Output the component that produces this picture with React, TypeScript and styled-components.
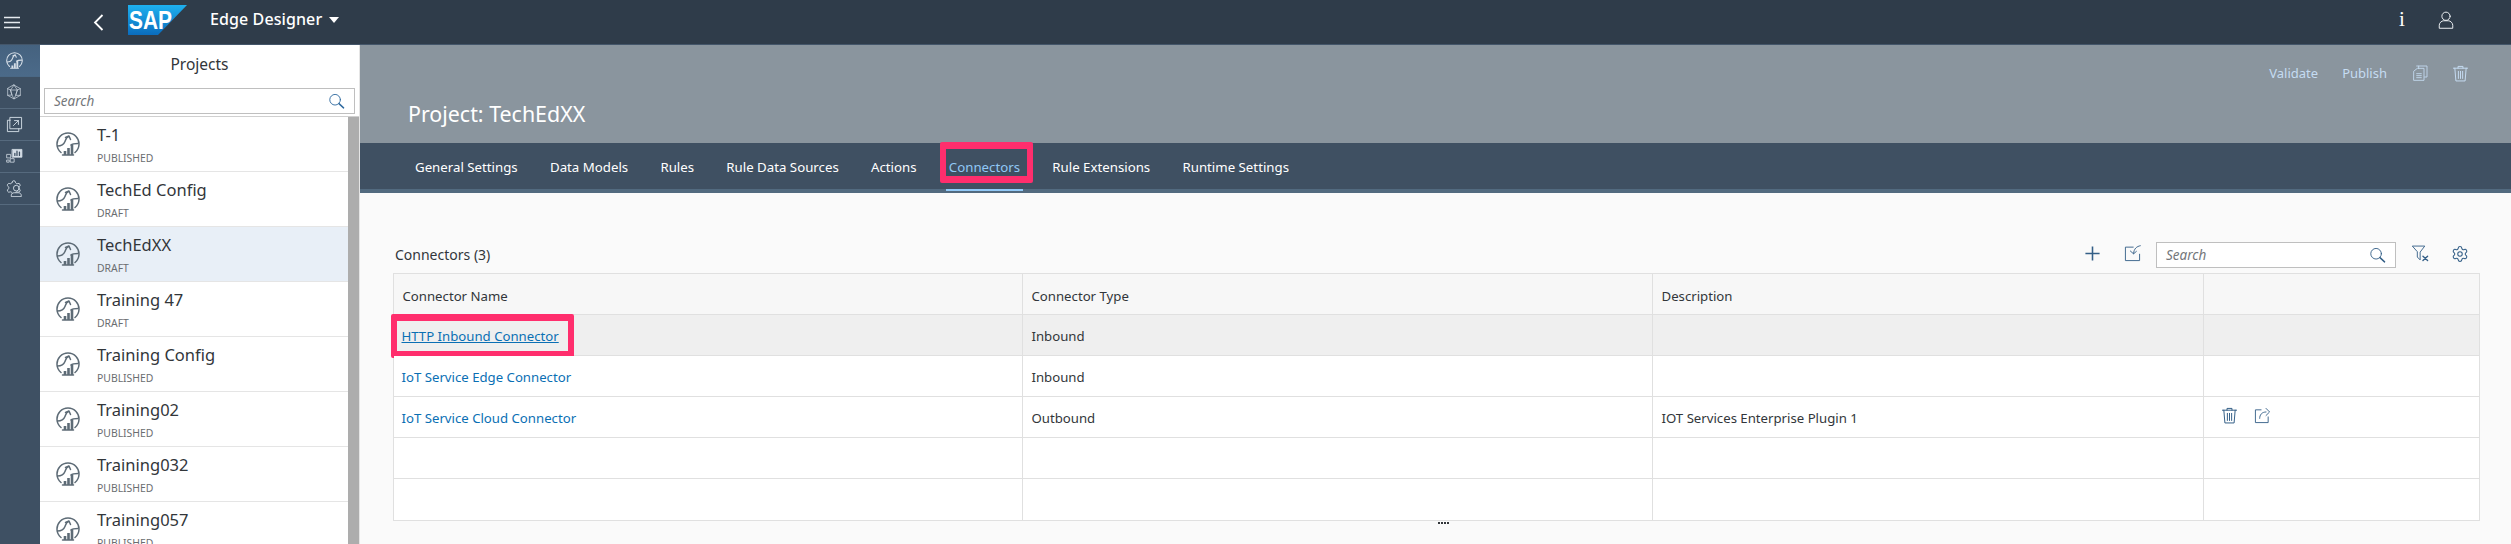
import React from "react";
import styled, { createGlobalStyle } from "styled-components";
import { Settings } from "lucide-react";

const FONT = `"Noto Sans", "Open Sans", "Liberation Sans", sans-serif`;

const Global = createGlobalStyle`
  html, body { margin: 0; padding: 0; background: #fafafa; }
  body { font-family: ${FONT}; overflow: hidden; }
  * { box-sizing: border-box; }
`;

const Page = styled.div`
  width: 2511px;
  height: 544px;
  display: flex;
  flex-direction: column;
  overflow: hidden;
`;

const Shell = styled.header`
  height: 45px;
  flex: none;
  display: flex;
  align-items: center;
  background: #2f3c4a;
  border-bottom: 1px solid #44566a;
  color: #fff;
`;
const Hamburger = styled.span`
  width: 24px;
  display: flex;
  justify-content: center;
  margin-right: 63px;
`;
const BackBtn = styled.span`
  width: 22px;
  display: flex;
  justify-content: center;
  margin-right: 19px;
`;
const ShellTitle = styled.span`
  margin-left: 23px;
  font-size: 16px;
  font-weight: 500;
  letter-spacing: 0.1px;
  margin-top: -6px;
`;
const Caret = styled.span`
  width: 0;
  height: 0;
  margin: -5px 0 0 7px;
  border-left: 5px solid transparent;
  border-right: 5px solid transparent;
  border-top: 6px solid #fff;
`;
const ShellRight = styled.div`
  margin-left: auto;
  padding-right: 43px;
  display: flex;
`;
const ShellBtn = styled.span`
  width: 44px;
  height: 24px;
  display: flex;
  align-items: center;
  justify-content: center;
  margin-top: -5px;
  font-family: "Liberation Serif", serif;
  font-weight: 400;
  font-size: 21px;
`;
const Logo = styled.svg`
  margin-top: -5px;
  flex: none;
`;

const Body = styled.div`
  flex: 1;
  min-height: 0;
  display: flex;
`;

const Rail = styled.nav`
  width: 40px;
  flex: none;
  background: #3e5063;
`;
const RailItem = styled.div<{ $active?: boolean }>`
  height: 32px;
  display: flex;
  align-items: center;
  justify-content: center;
  border-bottom: 1px solid ${(p) => (p.$active ? "#4a6885" : "#566a7e")};
  background: ${(p) => (p.$active ? "linear-gradient(180deg,#45627f,#4b6a89)" : "transparent")};
  padding-right: 12px;
  padding-bottom: 1px;
`;

const Panel = styled.aside`
  width: 320px;
  flex: none;
  display: flex;
  flex-direction: column;
  background: #fff;
  border-right: 1px solid #e5e5e5;
`;
const PanelTitle = styled.div`
  height: 43px;
  flex: none;
  text-align: center;
  line-height: 39px;
  font-size: 15.5px;
  color: #32363a;
`;
const SearchBox = styled.div<{ $w?: number }>`
  height: 26px;
  display: flex;
  align-items: center;
  justify-content: space-between;
  padding: 0 9px;
  background: #fff;
  border: 1px solid #bfbfbf;
  font-size: 13.5px;
  font-style: italic;
  color: #74777a;
  ${(p) => (p.$w ? `width: ${p.$w}px;` : "")}
`;
const PanelSearch = styled.div`
  flex: none;
  padding: 0 4px;
  height: 29px;
  border-bottom: 1px solid #d0d0d0;
`;
const ListWrap = styled.div`
  flex: 1;
  min-height: 0;
  display: flex;
  overflow: hidden;
`;
const List = styled.ul`
  flex: 1;
  margin: 0;
  padding: 0;
  list-style: none;
`;
const Scrollbar = styled.div`
  width: 11px;
  flex: none;
  background: #adadad;
`;
const Row = styled.li<{ $selected?: boolean }>`
  height: 55px;
  display: flex;
  align-items: center;
  padding-left: 16px;
  background: ${(p) => (p.$selected ? "#e8eff7" : "#fff")};
  border-bottom: 1px solid #e5e5e5;
`;
const RowText = styled.div`
  margin-left: 17px;
  display: flex;
  flex-direction: column;
`;
const RowName = styled.span`
  font-size: 16.5px;
  line-height: 22px;
  color: #32363a;
`;
const RowStatus = styled.span`
  font-size: 10.4px;
  line-height: 14px;
  margin-top: 5px;
  color: #6a6d70;
`;

const Main = styled.main`
  flex: 1;
  min-width: 0;
  display: flex;
  flex-direction: column;
  background: #fafafa;
`;
const ObjectHeader = styled.section`
  height: 98px;
  flex: none;
  background: #8a959e;
  display: flex;
  flex-direction: column;
  padding: 11px 31px 0 48px;
`;
const Actions = styled.div`
  height: 34px;
  display: flex;
  align-items: center;
  justify-content: flex-end;
`;
const ActionText = styled.span<{ $gap: number }>`
  font-size: 13px;
  color: #c5dcf2;
  margin-right: ${(p) => p.$gap}px;
`;
const IconBtn = styled.span`
  width: 40px;
  height: 24px;
  flex: none;
  display: flex;
  align-items: center;
  justify-content: center;
`;
const ToolBtn = styled(IconBtn)`
  margin-top: -3px;
`;
const ProjectTitle = styled.h1`
  margin: 10px 0 0;
  font-size: 21.4px;
  font-weight: 400;
  line-height: 28px;
  color: #fff;
`;
const TabBar = styled.div`
  height: 50px;
  flex: none;
  background: #3f5062;
  border-bottom: 4px solid #526a7f;
  display: flex;
  gap: 26.25px;
  padding-left: 52px;
`;
const Tab = styled.div<{ $active?: boolean }>`
  position: relative;
  height: 48px;
  padding: 2px 3px 0;
  display: flex;
  align-items: center;
  font-size: 13.25px;
  color: ${(p) => (p.$active ? "#91c8f6" : "#fff")};
  border-bottom: 2px solid ${(p) => (p.$active ? "#91c8f6" : "transparent")};
`;
const TabMark = styled.span`
  position: absolute;
  left: -6px;
  right: -10px;
  top: -1px;
  height: 41px;
  border-style: solid;
  border-color: #ff2e6d;
  border-width: 7px 6px;
  border-radius: 2px;
`;

const Content = styled.section`
  flex: 1;
  min-height: 0;
  padding: 49px 31px 0 33px;
`;
const Toolbar = styled.div`
  height: 26px;
  margin-bottom: 5px;
  display: flex;
  align-items: center;
`;
const TableTitle = styled.h2`
  margin: -2px auto 0 2px;
  font-size: 14px;
  font-weight: 400;
  color: #32363a;
`;
const ToolSearch = styled.div`
  margin: 0 4px;
`;
const Table = styled.table`
  width: 2087px;
  border-collapse: collapse;
  table-layout: fixed;
  font-size: 13.2px;
  color: #32363a;
`;
const Th = styled.th<{ $w?: number }>`
  ${(p) => (p.$w ? `width: ${p.$w}px;` : "")}
  height: 41px;
  padding: 3px 8.5px 0;
  text-align: left;
  font-weight: 400;
  background: #f7f7f7;
  border: 1px solid #e0e0e0;
`;
const Td = styled.td`
  position: relative;
  height: 41px;
  padding: 1px 8.5px 0;
  border: 1px solid #e0e0e0;
  background: #fff;
`;
const Tr = styled.tr<{ $hover?: boolean; $h?: number }>`
  ${(p) => (p.$h ? `height: ${p.$h}px;` : "")}
  & > td {
    ${(p) => (p.$hover ? "background: #efefef;" : "")}
    ${(p) => (p.$h ? `height: ${p.$h}px;` : "")}
  }
`;
const LinkText = styled.a<{ $under?: boolean }>`
  color: #0a6fb4;
  margin-left: -1px;
  text-decoration: ${(p) => (p.$under ? "underline" : "none")};
`;
const LinkMark = styled.span`
  position: absolute;
  left: -3px;
  top: -1px;
  width: 183px;
  height: 44px;
  border-style: solid;
  border-color: #ff2e6d;
  border-width: 7px 6px;
  border-radius: 2px;
`;
const RowActions = styled.div`
  display: flex;
  gap: 16px;
  margin-left: 8px;
  margin-top: -4px;
`;
const Grip = styled.div`
  width: 2087px;
  height: 4px;
  margin-top: 1px;
  display: flex;
  justify-content: center;
  gap: 1px;
  padding-left: 14px;
`;
const GripDot = styled.span`
  width: 2px;
  height: 2px;
  background: #32363a;
`;

const Ic = ({ s = 24, c = "#345f87", w = 1.3, children }: { s?: number; c?: string; w?: number; children: React.ReactNode }) => (
  <svg width={s} height={s} viewBox="0 0 24 24" fill="none" stroke={c} strokeWidth={w} strokeLinecap="round" strokeLinejoin="round">
    {children}
  </svg>
);

const ProjectIcon = ({ c = "#5d6b76", s = 24 }: { c?: string; s?: number }) => (
  <Ic s={s} c={c} w={1.5}>
    <path d="M5 20.500A11 11 0 1 1 19 20.500" />
    <path d="M1.500 14c4 0 6.500-2 7.500-4.500S10.500 5 12.500 4.500" />
    <path d="M9.500 5.500l3.500-1.500 1.500 3.500" />
    <path d="M15 13c1-1 3-1.500 7-1.500" />
    <path d="M6.500 23h11" />
    <path d="M9 23v-4M12.500 23v-7M16 23V12.500" strokeWidth={2.6} strokeLinecap="butt" />
  </Ic>
);

const SearchGlyph = ({ c = "#345f87" }: { c?: string }) => (
  <Ic s={17} c={c} w={1.3}>
    <circle cx="10" cy="9.500" r="7.500" />
    <path d="M15.500 15l6.500 6" strokeWidth={2} />
  </Ic>
);

const TrashIcon = ({ c, s = 17 }: { c: string; s?: number }) => (
  <Ic s={s} c={c} w={1.4}>
    <path d="M2 4.500h20M8.500 4.500V2h7v2.500" />
    <path d="M4 4.500l1.500 18h13l1.500-18" />
    <path d="M9 9v10M12 9v10M15 9v10" />
  </Ic>
);

const rows = [
  { n: "T-1", s: "PUBLISHED" },
  { n: "TechEd Config", s: "DRAFT" },
  { n: "TechEdXX", s: "DRAFT", sel: true },
  { n: "Training 47", s: "DRAFT" },
  { n: "Training Config", s: "PUBLISHED" },
  { n: "Training02", s: "PUBLISHED" },
  { n: "Training032", s: "PUBLISHED" },
  { n: "Training057", s: "PUBLISHED" },
];

const tabs = ["General Settings", "Data Models", "Rules", "Rule Data Sources", "Actions", "Connectors", "Rule Extensions", "Runtime Settings"];

const RAIL = "#d5dee7";
const RAIL_BG = "#3e5063";

export default function App() {
  return (
    <Page>
      <Global />
      <Shell>
        <Hamburger>
          <svg width="16" height="13" viewBox="0 0 16 13" stroke="#e6ebf0" strokeWidth="1.5">
            <path d="M0 1.500h16M0 6.500h16M0 11.500h16" />
          </svg>
        </Hamburger>
        <BackBtn>
          <svg width="11" height="17" viewBox="0 0 11 17" fill="none" stroke="#fff" strokeWidth="1.8">
            <path d="M9.500 1L2 8.500 9.500 16" />
          </svg>
        </BackBtn>
        <Logo width="59" height="30" viewBox="0 0 59 30">
          <defs>
            <linearGradient id="sapg" x1="0" y1="0" x2="0" y2="1">
              <stop offset="0" stopColor="#1eb0ef" />
              <stop offset="1" stopColor="#0a6cbd" />
            </linearGradient>
          </defs>
          <polygon points="0,0 59,0 30,30 0,30" fill="url(#sapg)" />
          <text x="1" y="24" fill="#fff" fontFamily="Liberation Sans" fontWeight="700" fontSize="26" textLength="43" lengthAdjust="spacingAndGlyphs">SAP</text>
        </Logo>
        <ShellTitle>Edge Designer</ShellTitle>
        <Caret />
        <ShellRight>
          <ShellBtn>i</ShellBtn>
          <ShellBtn>
            <Ic s={18} c="#eef2f5" w={1.3}>
              <circle cx="12" cy="7" r="5.500" />
              <path d="M3 22.500v-3.500c0-3 3-6 6-6h6c3 0 6 3 6 6v3.500z" />
            </Ic>
          </ShellBtn>
        </ShellRight>
      </Shell>
      <Body>
        <Rail>
          <RailItem $active>
            <ProjectIcon c={RAIL} s={17} />
          </RailItem>
          <RailItem>
            <Ic s={16} c={RAIL} w={1}>
              <path d="M12 1.500l9.500 5.500v10L12 22.500 2.500 17V7z" />
              <path d="M12 1.500L7 9l-4.500-2M12 1.500L17 9l4.500-2M7 9h10l-2.500 8L12 22.500 9 16.500zM7 9l2 7.500-6.500.5M17 9l-2.500 8 7 0" />
            </Ic>
          </RailItem>
          <RailItem>
            <Ic s={17} c={RAIL} w={1.3}>
              <path d="M6 2h16v16H6z" />
              <path d="M6 6H2v16h16v-4" />
              <path d="M10.500 13.500L17.500 6.500M12 6.500h5.500V12" />
            </Ic>
          </RailItem>
          <RailItem>
            <Ic s={17} c={RAIL} w={1.1}>
              <path d="M1.500 9h5v5h-5zM6.500 15h5v5h-5zM1.500 17h3v3h-3z" />
              <path d="M9 2h13.500v11H9z" fill={RAIL} />
              <path d="M12.500 10.500V7.500M15.500 10.500V4.500M19 10.500V6" stroke={RAIL_BG} strokeWidth={1.8} />
            </Ic>
          </RailItem>
          <RailItem>
            <Ic s={17} c={RAIL} w={1.3}>
              <g transform="translate(-1 -1)">
                <path d="M9.671 4.136a2.34 2.34 0 0 1 4.659 0 2.34 2.34 0 0 0 3.319 1.915 2.34 2.34 0 0 1 2.33 4.033 2.34 2.34 0 0 0 0 3.831 2.34 2.34 0 0 1-2.33 4.033 2.34 2.34 0 0 0-3.319 1.915 2.34 2.34 0 0 1-4.659 0 2.34 2.34 0 0 0-3.32-1.915 2.34 2.34 0 0 1-2.33-4.033 2.34 2.34 0 0 0 0-3.831A2.34 2.34 0 0 1 6.35 6.051a2.34 2.34 0 0 0 3.319-1.915" />
              </g>
              <circle cx="14.500" cy="11.500" r="4" fill={RAIL_BG} />
              <path d="M7.500 23v-1.500c0-2 2-3.500 4-3.500h6c2 0 4 1.500 4 3.500V23z" fill={RAIL_BG} />
            </Ic>
          </RailItem>
        </Rail>
        <Panel>
          <PanelTitle>Projects</PanelTitle>
          <PanelSearch>
            <SearchBox>
              Search
              <SearchGlyph c="#2f6a9f" />
            </SearchBox>
          </PanelSearch>
          <ListWrap>
            <List>
              {rows.map((r) => (
                <Row key={r.n} $selected={r.sel}>
                  <ProjectIcon />
                  <RowText>
                    <RowName>{r.n}</RowName>
                    <RowStatus>{r.s}</RowStatus>
                  </RowText>
                </Row>
              ))}
            </List>
            <Scrollbar />
          </ListWrap>
        </Panel>
        <Main>
          <ObjectHeader>
            <Actions>
              <ActionText $gap={24}>Validate</ActionText>
              <ActionText $gap={13}>Publish</ActionText>
              <IconBtn>
                <Ic s={16} c="#c5dcf2" w={1.3}>
                  <path d="M10 5.500V1.500h12.500v16.500H19" />
                  <path d="M7 1.500h3M3 9l5-4h10v18H3z" />
                  <path d="M7 13h7M7 16h7M7 19h7" />
                </Ic>
              </IconBtn>
              <IconBtn>
                <TrashIcon c="#c5dcf2" />
              </IconBtn>
            </Actions>
            <ProjectTitle>Project: TechEdXX</ProjectTitle>
          </ObjectHeader>
          <TabBar>
            {tabs.map((t) => (
              <Tab key={t} $active={t === "Connectors"}>
                {t}
                {t === "Connectors" && <TabMark />}
              </Tab>
            ))}
          </TabBar>
          <Content>
            <Toolbar>
              <TableTitle>Connectors (3)</TableTitle>
              <ToolBtn>
                <Ic s={17} c="#345f87" w={2.2}>
                  <path d="M12 2v20M2 12h20" strokeLinecap="butt" />
                </Ic>
              </ToolBtn>
              <ToolBtn>
                <Ic s={17} c="#345f87" w={1.3}>
                  <path d="M13 3H2v19h20v-9" />
                  <path d="M23 1c-5 1-9 4-9.500 11M9 8.500l4.500 4 4-3.500" />
                </Ic>
              </ToolBtn>
              <ToolSearch>
                <SearchBox $w={240}>
                  Search
                  <SearchGlyph />
                </SearchBox>
              </ToolSearch>
              <ToolBtn>
                <Ic s={17} c="#345f87" w={1.3}>
                  <path d="M1 1.500h17l-6.500 8.500v11l-4-4v-7z" />
                  <path d="M15.500 16l6.500 6M22 16l-6.500 6" strokeWidth={2} />
                </Ic>
              </ToolBtn>
              <ToolBtn>
                <Settings size={18} color="#345f87" strokeWidth={1.4} />
              </ToolBtn>
            </Toolbar>
            <Table>
              <thead>
                <tr>
                  <Th $w={629}>Connector Name</Th>
                  <Th $w={630}>Connector Type</Th>
                  <Th $w={551}>Description</Th>
                  <Th />
                </tr>
              </thead>
              <tbody>
                <Tr $hover>
                  <Td>
                    <LinkText $under>HTTP Inbound Connector</LinkText>
                    <LinkMark />
                  </Td>
                  <Td>Inbound</Td>
                  <Td />
                  <Td />
                </Tr>
                <Tr>
                  <Td>
                    <LinkText>IoT Service Edge Connector</LinkText>
                  </Td>
                  <Td>Inbound</Td>
                  <Td />
                  <Td />
                </Tr>
                <Tr>
                  <Td>
                    <LinkText>IoT Service Cloud Connector</LinkText>
                  </Td>
                  <Td>Outbound</Td>
                  <Td>IOT Services Enterprise Plugin 1</Td>
                  <Td>
                    <RowActions>
                      <TrashIcon c="#345f87" />
                      <Ic s={17} c="#345f87" w={1.3}>
                        <path d="M10 4H2v18h18v-8" />
                        <path d="M8 16c0-5 3-9 9-9M17 2l5 5-5 5" />
                      </Ic>
                    </RowActions>
                  </Td>
                </Tr>
                <Tr>
                  <Td />
                  <Td />
                  <Td />
                  <Td />
                </Tr>
                <Tr $h={42}>
                  <Td />
                  <Td />
                  <Td />
                  <Td />
                </Tr>
              </tbody>
            </Table>
            <Grip>
              <GripDot />
              <GripDot />
              <GripDot />
              <GripDot />
            </Grip>
          </Content>
        </Main>
      </Body>
    </Page>
  );
}
